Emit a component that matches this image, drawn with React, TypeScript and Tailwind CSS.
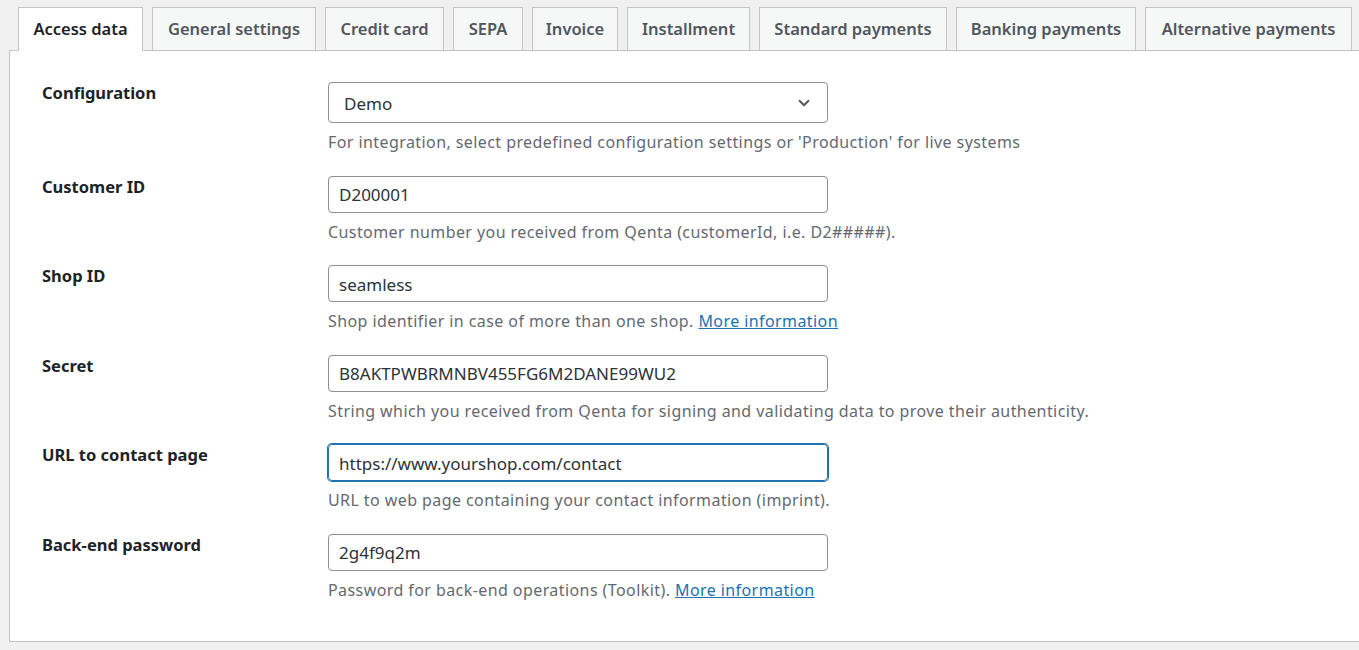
import { ChevronDown } from "lucide-react";

const TABS = [
  { name: "Access data", w: "w-[125px]" },
  { name: "General settings", w: "w-[164px]" },
  { name: "Credit card", w: "w-[119px]" },
  { name: "SEPA", w: "w-[70px]" },
  { name: "Invoice", w: "w-[86px]" },
  { name: "Installment", w: "w-[123px]" },
  { name: "Standard payments", w: "w-[188px]" },
  { name: "Banking payments", w: "w-[180px]" },
  { name: "Alternative payments", w: "w-[207px]" },
];

type Field = {
  label: string;
  value: string;
  desc: string;
  link?: boolean;
  select?: boolean;
  focused?: boolean;
};

const FIELDS: Field[] = [
  {
    label: "Configuration",
    value: "Demo",
    desc: "For integration, select predefined configuration settings or 'Production' for live systems",
    select: true,
  },
  {
    label: "Customer ID",
    value: "D200001",
    desc: "Customer number you received from Qenta (customerId, i.e. D2#####).",
  },
  {
    label: "Shop ID",
    value: "seamless",
    desc: "Shop identifier in case of more than one shop.",
    link: true,
  },
  {
    label: "Secret",
    value: "B8AKTPWBRMNBV455FG6M2DANE99WU2",
    desc: "String which you received from Qenta for signing and validating data to prove their authenticity.",
  },
  {
    label: "URL to contact page",
    value: "https://www.yourshop.com/contact",
    desc: "URL to web page containing your contact information (imprint).",
    focused: true,
  },
  {
    label: "Back-end password",
    value: "2g4f9q2m",
    desc: "Password for back-end operations (Toolkit).",
    link: true,
  },
];

export default function App() {
  return (
    <div className="min-h-[650px] overflow-hidden bg-[#f0f0f1] pt-[7px] pl-[9px] font-['Noto_Sans',sans-serif]">
      <div className="relative z-10 -mb-px flex gap-[9px] pl-[9px]">
        {TABS.map((t, i) => (
          <div
            key={t.name}
            className={`${t.w} flex h-[44px] shrink-0 items-center justify-center border text-[16.5px] font-semibold whitespace-nowrap
              ${
                i === 0
                  ? "border-[#c3c4c7] border-b-white bg-white text-[#1d2327]"
                  : "border-[#c3c4c7] bg-[#f6f7f7] text-[#50575e]"
              }
            `}
          >
            {t.name}
          </div>
        ))}
      </div>

      <div className="mr-[-20px] flex h-[592px] flex-col gap-[21.5px] border border-[#c3c4c7] bg-white pt-[31px] pl-[32px]">
        {FIELDS.map((f) => (
          <div key={f.label} className="flex">
            <div className="w-[286px] shrink-0 text-[16.5px] leading-[22px] font-bold text-[#1d2327]">
              {f.label}
            </div>
            <div className="flex flex-col">
              {f.select ? (
                <div className="flex h-[41px] w-[500px] items-center justify-between rounded-[4px] border border-[#8c8f94] pt-[2px] pr-[14px] pl-[15px] text-[17px] text-[#2c3338]">
                  <span>{f.value}</span>
                  <ChevronDown size={18} strokeWidth={2.5} className="-mt-[2px] text-[#50575e]" />
                </div>
              ) : (
                <div
                  className={`flex h-[37px] w-[500px] items-center rounded-[4px] border px-[10px] pt-[2px] text-[17px] text-[#2c3338]
                    ${
                      f.focused
                        ? "border-[#2271b1] shadow-[0_0_0_1px_#2271b1]"
                        : "border-[#8c8f94]"
                    }
                  `}
                >
                  {f.value}
                </div>
              )}
              <p className="mt-[8px] text-[16px] leading-[23px] tracking-[0.42px] whitespace-nowrap text-[#646970]">
                {f.desc}
                {f.link && (
                  <>
                    {" "}
                    <a className="text-[#2271b1] underline">More information</a>
                  </>
                )}
              </p>
            </div>
          </div>
        ))}
      </div>
    </div>
  );
}
